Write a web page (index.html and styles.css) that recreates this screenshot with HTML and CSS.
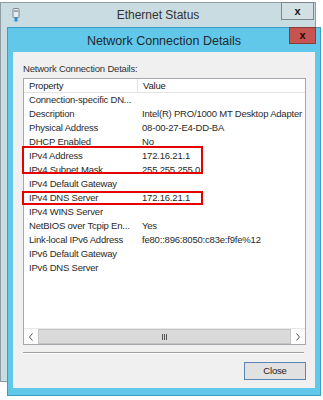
FILE: index.html
```html
<!DOCTYPE html>
<html>
<head>
<meta charset="utf-8">
<link rel="stylesheet" href="styles.css">
</head>
<body>
<div class="desk">
  <div class="outer">
    <div class="outer-bar">
      <svg class="outer-icon" width="8" height="14" viewBox="0 0 8 14">
        <rect x="1" y="0.5" width="6" height="9" rx="1" fill="#e8eef0" stroke="#7a8a92"/>
        <rect x="2" y="2" width="4" height="2" fill="#9aa8ae"/>
        <rect x="2.5" y="9.5" width="3" height="4" fill="#2a8fd0"/>
      </svg>
      <span class="outer-title">Ethernet Status</span>
      <span class="outer-close">x</span>
    </div>
  </div>
  <div class="inner">
    <div class="inner-bar">
      <span class="inner-title">Network Connection Details</span>
      <span class="inner-close">x</span>
    </div>
    <div class="content">
      <div class="label">Network Connection Details:</div>
      <div class="listbox">
        <div class="head">
          <div class="c1 hcell">Property</div>
          <div class="c2 hcell">Value</div>
        </div>
        <div class="rows">
          <div class="row"><div class="c1">Connection-specific DN...</div><div class="c2"></div></div>
          <div class="row"><div class="c1">Description</div><div class="c2">Intel(R) PRO/1000 MT Desktop Adapter</div></div>
          <div class="row"><div class="c1">Physical Address</div><div class="c2">08-00-27-E4-DD-BA</div></div>
          <div class="row"><div class="c1">DHCP Enabled</div><div class="c2">No</div></div>
          <div class="row"><div class="c1">IPv4 Address</div><div class="c2">172.16.21.1</div></div>
          <div class="row"><div class="c1">IPv4 Subnet Mask</div><div class="c2">255.255.255.0</div></div>
          <div class="row"><div class="c1">IPv4 Default Gateway</div><div class="c2"></div></div>
          <div class="row"><div class="c1">IPv4 DNS Server</div><div class="c2">172.16.21.1</div></div>
          <div class="row"><div class="c1">IPv4 WINS Server</div><div class="c2"></div></div>
          <div class="row"><div class="c1">NetBIOS over Tcpip En...</div><div class="c2">Yes</div></div>
          <div class="row"><div class="c1">Link-local IPv6 Address</div><div class="c2">fe80::896:8050:c83e:f9fe%12</div></div>
          <div class="row"><div class="c1">IPv6 Default Gateway</div><div class="c2"></div></div>
          <div class="row"><div class="c1">IPv6 DNS Server</div><div class="c2"></div></div>
        </div>
        <div class="hscroll">
          <div class="sbtn"><svg width="6" height="8" viewBox="0 0 6 8"><path d="M4.5 0.5 L1.5 4 L4.5 7.5" fill="none" stroke="#555" stroke-width="1"/></svg></div>
          <div class="thumb"><span class="grip"></span><span class="grip"></span><span class="grip"></span></div>
          <div class="sbtn"><svg width="6" height="8" viewBox="0 0 6 8"><path d="M1.5 0.5 L4.5 4 L1.5 7.5" fill="none" stroke="#555" stroke-width="1"/></svg></div>
        </div>
        <div class="mark mark1"></div>
        <div class="mark mark2"></div>
      </div>
      <div class="sep"></div>
      <div class="actions"><button class="btn">Close</button></div>
    </div>
  </div>
</div>
</body>
</html>
```

FILE: styles.css
```css
html, body {
  margin: 0;
  padding: 0;
  background: #ffffff;
}
body {
  width: 323px;
  height: 400px;
  overflow: hidden;
  font-family: "Liberation Sans", Arial, sans-serif;
  color: #222;
}
.desk {
  position: relative;
  width: 323px;
  height: 400px;
}
.outer {
  position: absolute;
  left: 0;
  top: 2px;
  width: 314px;
  height: 378px;
  background: #c9dce2;
  border: 1px solid #8f9ca3;
}
.outer-bar {
  position: relative;
  height: 25px;
  display: flex;
  align-items: center;
  justify-content: center;
}
.outer-icon {
  position: absolute;
  left: 11px;
  top: 5px;
}
.outer-title {
  font-size: 12px;
  color: #333;
  margin-top: -1px;
}
.outer-close {
  position: absolute;
  right: 1px;
  top: -1px;
  width: 31px;
  height: 16px;
  background: #d2e0e4;
  border: 1px solid #7c878c;
  display: flex;
  align-items: center;
  justify-content: center;
  font-size: 11px;
  font-weight: bold;
  color: #111;
  line-height: 1;
}
.inner {
  position: absolute;
  left: 7px;
  top: 27px;
  width: 312px;
  height: 367px;
  background: #62c8ea;
  border: 1px solid #3c9cc4;
  display: flex;
  flex-direction: column;
}
.inner-bar {
  position: relative;
  height: 24px;
  flex: none;
  display: flex;
  align-items: center;
  justify-content: center;
}
.inner-title {
  font-size: 12.5px;
  color: #1e2a30;
  margin-top: 1px;
}
.inner-close {
  position: absolute;
  right: 4px;
  top: -1px;
  width: 27px;
  height: 17px;
  background: #c75450;
  border: 1px solid #8e3a36;
  box-sizing: border-box;
  display: flex;
  align-items: center;
  justify-content: center;
  font-size: 11px;
  font-weight: bold;
  color: #1a0a0a;
  line-height: 1;
}
.content {
  margin: 0 5px 7px 5px;
  flex: 1;
  background: #f0f0f0;
  padding: 9px 9px 0 10px;
  display: flex;
  flex-direction: column;
  font-size: 9.5px;
  letter-spacing: -0.2px;
}
.label {
  height: 17px;
  line-height: 15px;
  color: #333;
  flex: none;
}
.listbox {
  position: relative;
  height: 265px;
  flex: none;
  background: #ffffff;
  border: 1px solid #a5a9ae;
  display: flex;
  flex-direction: column;
}
.head {
  display: flex;
  height: 13px;
  border-bottom: 1px solid #e3e3e3;
  flex: none;
}
.hcell {
  line-height: 13px;
}
.head .c1 {
  border-right: 1px solid #e3e3e3;
}
.c1 {
  width: 108px;
  padding-left: 5px;
  white-space: nowrap;
  flex: none;
}
.c2 {
  padding-left: 5px;
  white-space: nowrap;
}
.rows {
  flex: 1;
  min-height: 0;
}
.row {
  display: flex;
  height: 14px;
  line-height: 14px;
  color: #2a2a2a;
}
.hscroll {
  flex: none;
  height: 15px;
  display: flex;
  background: #f4f4f4;
  border-top: 1px solid #e8e8e8;
}
.sbtn {
  width: 14px;
  display: flex;
  align-items: center;
  justify-content: center;
  background: #fdfdfd;
}
.thumb {
  flex: 1;
  background: #dadada;
  border: 1px solid #c4c4c4;
  display: flex;
  align-items: center;
  justify-content: center;
  gap: 1px;
}
.grip {
  width: 1px;
  height: 6px;
  background: #555;
}
.mark {
  position: absolute;
  left: -2px;
  width: 177px;
  border: 2px solid #e60000;
}
.mark1 {
  top: 67px;
  height: 24px;
}
.mark2 {
  top: 112px;
  height: 10px;
}
.sep {
  margin-top: 7px;
  margin-right: 2px;
  height: 0;
  flex: none;
  border-top: 1px solid #a0a0a0;
  border-bottom: 1px solid #ffffff;
}
.actions {
  display: flex;
  justify-content: flex-end;
  margin-top: 8px;
}
.btn {
  width: 62px;
  height: 18px;
  padding: 0;
  background: #e1e1e1;
  border: 1px solid #5b86b3;
  font-family: "Liberation Sans", Arial, sans-serif;
  font-size: 9.5px;
  letter-spacing: -0.2px;
  color: #222;
  line-height: 14px;
}
```
